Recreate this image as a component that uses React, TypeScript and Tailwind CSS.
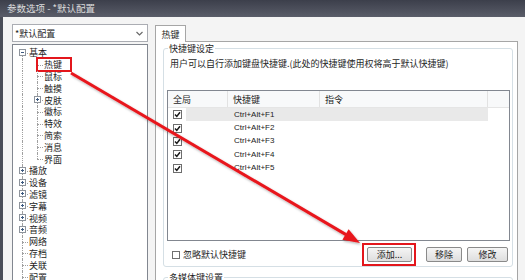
import React from 'react';

const cjk = "font-['Noto_Sans_CJK_SC',sans-serif]";

type TreeNode = {
  label: string;
  level: 1 | 2;
  box?: '+' | '-';
  first?: boolean;
  last?: boolean;
  selected?: boolean;
};

const tree: TreeNode[] = [
  { label: '基本', level: 1, box: '-', first: true },
  { label: '热键', level: 2, selected: true },
  { label: '鼠标', level: 2 },
  { label: '触摸', level: 2 },
  { label: '皮肤', level: 2, box: '+' },
  { label: '徽标', level: 2 },
  { label: '特效', level: 2 },
  { label: '简索', level: 2 },
  { label: '消息', level: 2 },
  { label: '界面', level: 2, last: true },
  { label: '播放', level: 1, box: '+' },
  { label: '设备', level: 1, box: '+' },
  { label: '滤镜', level: 1, box: '+' },
  { label: '字幕', level: 1, box: '+' },
  { label: '视频', level: 1, box: '+' },
  { label: '音频', level: 1, box: '+' },
  { label: '网络', level: 1 },
  { label: '存档', level: 1 },
  { label: '关联', level: 1 },
  { label: '配置', level: 1 },
];

const hotkeys = ['Ctrl+Alt+F1', 'Ctrl+Alt+F2', 'Ctrl+Alt+F3', 'Ctrl+Alt+F4', 'Ctrl+Alt+F5'];

// one column of tree lines, optional +/- box on it
function Conn({ v, tick, box }: { v: 'full' | 'top' | 'bottom'; tick: boolean; box?: '+' | '-' }) {
  const vClass = v === 'full' ? 'top-0 bottom-0' : v === 'top' ? 'top-0 h-1/2' : 'top-1/2 bottom-0';
  return (
    <span className="relative h-full w-[15px] shrink-0">
      <span className={`absolute left-[8px] w-0 border-l border-dotted border-[#a0a0a0] ${vClass}`} />
      {tick && <span className="absolute left-[8px] top-1/2 h-0 w-[6px] border-t border-dotted border-[#a0a0a0]" />}
      {box && (
        <span className="absolute left-[5px] top-1/2 -mt-[4px] flex h-[7px] w-[7px] items-center justify-center border border-[#8e949c] bg-white">
          <span className="absolute h-px w-[3px] bg-[#3d5a80]" />
          {box === '+' && <span className="absolute h-[3px] w-px bg-[#3d5a80]" />}
        </span>
      )}
    </span>
  );
}

function Check({ checked }: { checked: boolean }) {
  return (
    <span className="flex h-[9px] w-[9px] items-center justify-center border border-[#6d6d6d] bg-white">
      {checked && (
        <svg width="7" height="7" viewBox="0 0 7 7">
          <path d="M1 3.4 L2.8 5.4 L6 1.2" fill="none" stroke="#1a1a1a" strokeWidth="1.5" />
        </svg>
      )}
    </span>
  );
}

function Button({ children, w }: { children: React.ReactNode; w: string }) {
  return (
    <div
      className={`flex h-[15px] ${w} items-center justify-center rounded-[2px] border border-[#8a8a8a] bg-linear-to-b from-[#f5f5f5] to-[#dedede] text-[9px] leading-none text-[#222]`}
    >
      {children}
    </div>
  );
}

function Arrow() {
  return (
    <svg className="pointer-events-none absolute inset-0" width="525" height="280" viewBox="0 0 525 280">
      <defs>
        <filter id="sh" x="-10%" y="-10%" width="120%" height="120%">
          <feDropShadow dx="1" dy="1.5" stdDeviation="0.8" floodColor="#000" floodOpacity="0.3" />
        </filter>
      </defs>
      <g filter="url(#sh)">
        <line x1="71" y1="73" x2="346" y2="234.6" stroke="#e8151c" strokeWidth="3" />
        <polygon points="360,243 342.4,239.8 348.6,229.2" fill="#e8151c" />
      </g>
    </svg>
  );
}

export default function App() {
  return (
    <div className={`relative h-[280px] w-[525px] overflow-hidden bg-[#f4f4f4] text-[#1e1e1e] ${cjk}`}>
      {/* title bar */}
      <div className="flex h-[17px] items-center bg-linear-to-b from-[#3c3f4b] to-[#5a5d69] pl-[7px] text-[9.5px] leading-none text-[#dcdcdc]">
        参数选项 - *默认配置
      </div>

      <div className="flex h-[290px] border-l-[3px] border-[#4a4d58] pl-[9px] pt-[7px]">
        {/* left column */}
        <div className="flex w-[136px] shrink-0 flex-col">
          <div className="flex h-[18px] items-center justify-between border border-[#abadb3] bg-white pl-[2px] pr-[4px] text-[9px] leading-none">
            <span>*默认配置</span>
            <svg width="7" height="5" viewBox="0 0 7 5">
              <path d="M0.5 1 L3.5 4 L6.5 1" fill="none" stroke="#6a6a6a" strokeWidth="1.2" />
            </svg>
          </div>
          <div className="mt-[2px] h-[250px] border border-[#828790] bg-white pl-[1px] pt-[2px]">
            {tree.map((n) => (
              <div key={n.label} className="relative flex h-[11.8px]">
                {n.level === 1 ? (
                  <Conn v={n.first ? 'bottom' : 'full'} tick box={n.box} />
                ) : (
                  <>
                    <Conn v="full" tick={false} />
                    <Conn v={n.last ? 'top' : 'full'} tick box={n.box} />
                  </>
                )}
                <span className="self-center whitespace-nowrap text-[9px] leading-[11px]">{n.label}</span>
                {n.selected && (
                  <span className="absolute left-[22px] top-[-1.5px] h-[15px] w-[36px] border-2 border-[#e3161c]" />
                )}
              </div>
            ))}
          </div>
        </div>

        {/* right column */}
        <div className="ml-[7px] mt-[1px] flex w-[363px] shrink-0 flex-col">
          <div className="relative z-10 -mb-px flex h-[17px] w-[31px] items-center justify-center border border-b-0 border-[#a6a6a6] bg-white text-[9px] leading-none">
            热键
          </div>
          <div className="h-[250px] border border-[#a6a6a6] bg-white pl-[7px] pr-[4px] pt-[6px]">
            {/* hotkey group */}
            <div className="relative rounded-[3px] border border-[#d5dfe5] pl-[3px] pr-[2px] pt-[9px]">
              <span className="absolute -top-[6px] left-[4px] bg-white px-px text-[9px] leading-[11px]">快捷键设定</span>
              <div className="ml-[3px] text-[9px] leading-[11px]">
                用户可以自行添加键盘快捷键.(此处的快捷键使用权将高于默认快捷键)
              </div>

              <div className="mt-[21px] h-[151px] border border-[#828790] bg-white">
                <div className="flex h-[17px] border-b border-[#e5e5e5] bg-[#f8f9fa] text-[9px] leading-none">
                  <div className="flex w-[60px] items-center border-r border-[#e2e2e2] pl-[5px]">全局</div>
                  <div className="flex w-[92px] items-center border-r border-[#e2e2e2] pl-[5px]">快捷键</div>
                  <div className="flex w-[168px] items-center border-r border-[#e2e2e2] pl-[5px]">指令</div>
                </div>
                {hotkeys.map((k, i) => (
                  <div key={k} className="flex h-[13.4px]">
                    <div className="flex w-[18px] items-center pl-[5px]">
                      <Check checked />
                    </div>
                    <div
                      className={`flex w-[302px] items-center pl-[48px] font-['Liberation_Sans',sans-serif] text-[8px] leading-none text-[#222] ${
                        i === 0 ? 'bg-[#e9e9e9]' : ''
                      }`}
                    >
                      {k}
                    </div>
                  </div>
                ))}
              </div>

              <div className="mt-[2px] flex h-[23px] items-center">
                <div className="ml-[5px] h-[8px] w-[8px] border border-[#707070] bg-white" />
                <span className="ml-[3px] text-[9px] leading-none">忽略默认快捷键</span>
                <div className="ml-auto mr-[2px] flex items-center">
                  <div className="h-[23px] border-2 border-[#e3161c] pl-[3px] pr-[2px] pt-[2px]">
                    <Button w="w-[45px]">添加...</Button>
                  </div>
                  <div className="ml-[10px]">
                    <Button w="w-[36px]">移除</Button>
                  </div>
                  <div className="ml-[5px]">
                    <Button w="w-[41px]">修改</Button>
                  </div>
                </div>
              </div>
            </div>

            {/* media keys group, cut by the window edge */}
            <div className="relative mt-[10px] h-[30px] rounded-[3px] border border-[#d5dfe5]">
              <span className="absolute -top-[6px] left-[4px] bg-white px-px text-[9px] leading-[11px]">多媒体键设置</span>
            </div>
          </div>
        </div>
      </div>

      <Arrow />
    </div>
  );
}
